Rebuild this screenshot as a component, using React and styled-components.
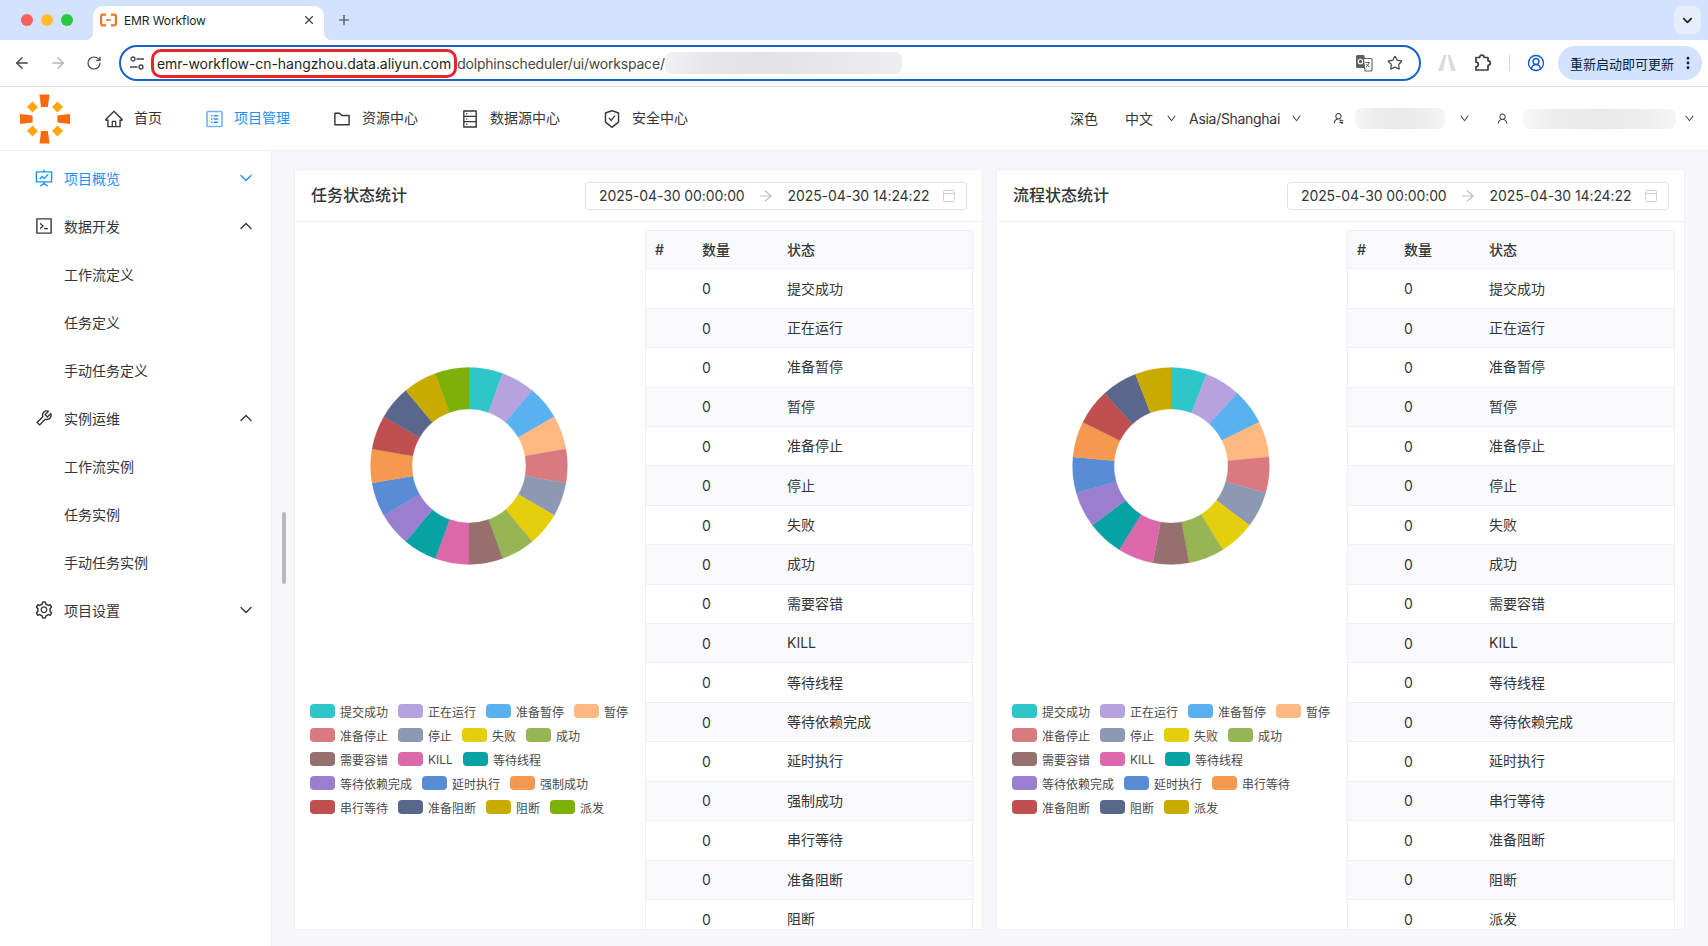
import styled, { createGlobalStyle } from "styled-components";
import { ArrowLeft, ArrowRight, RotateCw, Star, Plus, X, ChevronDown, ChevronUp, CircleUserRound, EllipsisVertical } from "lucide-react";
import {
  AiOutlineHome,
  AiOutlineFolder,
  AiOutlineDatabase,
  AiOutlineSafetyCertificate,
  AiOutlineFundProjectionScreen,
  AiOutlineCode,
  AiOutlineTool,
  AiOutlineSetting,
  AiOutlineDown,
  AiOutlineUser,
  AiOutlineUserSwitch,
  AiOutlineArrowRight,
} from "react-icons/ai";

const Text = "rgb(51, 54, 57)";
const Line = "#efeff5";
const Active = "#1890ff";

const GlobalStyle = createGlobalStyle`
  html, body {
    margin: 0;
    height: 100%;
    overflow: hidden;
    background: #fff;
    font-family: Inter, "Noto Sans CJK SC", sans-serif;
    color: ${Text};
  }
  * { box-sizing: border-box; }
`;

const Page = styled.div`
  width: 1708px;
  height: 946px;
  display: flex;
  flex-direction: column;
  overflow: hidden;
`;

/* browser chrome */
const TabStrip = styled.div`
  height: 40px;
  flex: none;
  background: #d3e3fd;
  display: flex;
  align-items: flex-end;
  padding-left: 21px;
`;

const Lights = styled.div`
  display: flex;
  gap: 8px;
  align-self: center;
  width: 72px;
`;

const Light = styled.span`
  width: 12px;
  height: 12px;
  border-radius: 50%;
  background: ${(p) => p.$color};
`;

const Tab = styled.div`
  position: relative;
  width: 231px;
  height: 34px;
  background: #fff;
  border-radius: 10px 10px 0 0;
  display: flex;
  align-items: center;
  padding: 0 8px 6px 7px;
  font-size: 12px;
  letter-spacing: -0.1px;
  color: #1f1f1f;
  svg { flex: none; }

  &::before, &::after {
    content: "";
    position: absolute;
    bottom: 0;
    width: 8px;
    height: 8px;
  }
  &::before {
    left: -8px;
    background: radial-gradient(circle at 0 0, transparent 8px, #fff 8.5px);
  }
  &::after {
    right: -8px;
    background: radial-gradient(circle at 100% 0, transparent 8px, #fff 8.5px);
  }
`;

const TabTitle = styled.span`
  flex: 1;
  margin-left: 7px;
`;

const NewTab = styled.div`
  width: 40px;
  height: 34px;
  padding-bottom: 6px;
  display: flex;
  align-items: center;
  justify-content: center;
  color: #444746;
`;

const TabMenu = styled.div`
  margin: 0 7px 6px auto;
  width: 27px;
  height: 28px;
  border-radius: 8px;
  background: #e6eefc;
  display: flex;
  align-items: center;
  justify-content: center;
  color: #1f1f1f;
`;

const Toolbar = styled.div`
  height: 47px;
  flex: none;
  background: #fff;
  display: flex;
  align-items: center;
  padding-left: 4px;
  border-bottom: 1px solid #dfdfdf;
  border-radius: 10px 0 0 0;
  position: relative;
`;

const ToolSlot = styled.div`
  width: 36px;
  height: 36px;
  display: flex;
  align-items: center;
  justify-content: center;
  color: ${(p) => p.$color || "#444746"};
  margin-left: ${(p) => p.$ml || 0}px;
`;

const Omnibox = styled.div`
  margin: 0 8px 0 7px;
  width: 1302px;
  height: 36px;
  border: 2px solid #1a62c7;
  border-radius: 18px;
  display: flex;
  align-items: center;
  padding: 0 16px 0 8px;
  font-size: 14px;
  color: #1f1f1f;
`;

const TuneIcon = styled.svg`
  flex: none;
  margin-right: 6px;
`;

const Host = styled.span`
  display: inline-flex;
  align-items: center;
  height: 29px;
  padding: 0 3px;
  border: 3px solid #e8262a;
  border-radius: 10px;
  letter-spacing: -0.05px;
  white-space: nowrap;
`;

const UrlPath = styled.span`
  color: #474747;
  letter-spacing: -0.2px;
  white-space: nowrap;
`;

const Blurred = styled.div`
  width: ${(p) => p.$w}px;
  height: ${(p) => p.$h}px;
  flex: none;
  border-radius: 7px;
  background: linear-gradient(90deg, #f1f1f3 0%, #e7e7ea 18%, #e3e3e6 42%, #e8e8eb 70%, #eeeef1 100%);
`;

const OmniIcons = styled.div`
  margin-left: auto;
  display: flex;
  align-items: center;
  gap: 14px;
  color: #444746;
`;

const ToolDivider = styled.div`
  width: 1px;
  height: 16px;
  margin-left: 8px;
  background: #c9d7ee;
`;

const UpdatePill = styled.div`
  margin-left: 4px;
  width: 144px;
  height: 34px;
  border-radius: 17px;
  background: #d3e3fd;
  display: flex;
  align-items: center;
  padding: 0 6px 0 12px;
  font-size: 13px;
  color: #0a1f44;
  white-space: nowrap;
  svg { margin-left: auto; }
`;

/* app header */
const Header = styled.header`
  height: 64px;
  flex: none;
  display: flex;
  align-items: center;
  padding: 0 13px 0 18px;
  border-bottom: 1px solid ${Line};
  font-size: 14px;
`;

const Nav = styled.nav`
  display: flex;
  align-items: center;
  gap: 42px;
  margin-left: 32px;
`;

const NavItem = styled.div`
  display: flex;
  align-items: center;
  gap: 10px;
  color: ${(p) => (p.$active ? Active : Text)};
  svg { flex: none; }
`;

/* the CJK face sits a little low next to Latin text and icons */
const CjkLabel = styled.span`
  padding-bottom: ${(p) => p.$lift || 2}px;
`;

const HeaderRight = styled.div`
  margin-left: auto;
  display: flex;
  align-items: center;
`;

const HeaderCell = styled.div`
  display: flex;
  align-items: center;
  margin-left: ${(p) => p.$ml || 0}px;
  gap: ${(p) => p.$gap || 0}px;
  white-space: nowrap;
  svg { flex: none; }
`;

const TimeZone = styled.span`
  letter-spacing: -0.3px;
`;

const HeaderBlur = styled(Blurred)`
  background: linear-gradient(90deg, #f7f7f7 0%, #ededed 22%, #e9e9e9 50%, #eeeeee 80%, #f6f6f6 100%);
`;

/* layout below the header */
const Main = styled.div`
  flex: 1;
  min-height: 0;
  display: flex;
  position: relative;
`;

const Sidebar = styled.aside`
  width: 272px;
  flex: none;
  padding-top: 3px;
  background: #fff;
  border-right: 1px solid ${Line};
  font-size: 14px;
`;

const MenuRow = styled.div`
  height: 48px;
  display: flex;
  align-items: center;
  gap: 10px;
  padding: 0 15px 0 ${(p) => (p.$sub ? 64 : 34)}px;
  color: ${(p) => (p.$active ? Active : Text)};
  svg { flex: none; }
  svg:last-child:not(:first-child) { margin-left: auto; }
`;

const ScrollThumb = styled.div`
  position: absolute;
  left: 282px;
  top: 361px;
  width: 4px;
  height: 72px;
  border-radius: 2px;
  background: #b9b9bc;
`;

const Content = styled.main`
  flex: 1;
  min-width: 0;
  min-height: 0;
  background: #f6f6fb;
  display: flex;
  gap: 13px;
  padding: 18px 22px 16px 22px;
`;

const Card = styled.section`
  width: 689px;
  flex: none;
  background: #fff;
  border: 1px solid ${Line};
  border-radius: 3px;
  overflow: hidden;
`;

const CardHeader = styled.div`
  height: 52px;
  display: flex;
  align-items: center;
  justify-content: space-between;
  padding: 0 15px 0 16px;
  border-bottom: 1px solid ${Line};
`;

const CardTitle = styled.h2`
  margin: 0;
  padding-bottom: 4px;
  font-size: 16px;
  font-weight: 500;
`;

const DateRange = styled.div`
  width: 382px;
  height: 28px;
  border: 1px solid #e0e0e6;
  border-radius: 3px;
  display: flex;
  align-items: center;
  padding: 0 10px 0 13px;
  font-size: 14px;
  letter-spacing: -0.1px;
  color: ${Text};
  white-space: nowrap;
`;

const RangeArrow = styled(AiOutlineArrowRight)`
  margin: 0 14px 0 13px;
  color: #c2c2c2;
  flex: none;
`;

const CalendarIcon = styled.svg`
  margin-left: auto;
  flex: none;
`;

const CardBody = styled.div`
  display: flex;
  align-items: flex-start;
`;

const ChartPane = styled.div`
  width: 350px;
  flex: none;
  padding: 8px 5px 0 15px;
`;

const ChartBox = styled.div`
  height: 472px;
  margin-left: -16px;
  margin-right: -4px;
  display: flex;
  align-items: center;
  justify-content: center;
`;

const Legend = styled.div`
  margin-top: 2px;
  display: flex;
  flex-wrap: wrap;
  gap: 10px;
`;

const LegendItem = styled.div`
  display: flex;
  align-items: center;
  gap: 5px;
  height: 14px;
  font-size: 12px;
  color: #4a4a4a;
  white-space: nowrap;
`;

const Swatch = styled.span`
  width: 25px;
  height: 14px;
  border-radius: 4px;
  background: ${(p) => p.$color};
`;

const Table = styled.div`
  width: 328px;
  flex: none;
  margin-top: 8px;
  border: 1px solid ${Line};
  border-bottom: 0;
  border-radius: 3px 3px 0 0;
  font-size: 14px;
`;

const TableRow = styled.div`
  height: ${(p) => (p.$head ? 38.42 : 39.42)}px;
  display: grid;
  grid-template-columns: 56px 85px 1fr;
  align-items: center;
  border-bottom: 1px solid ${Line};
  background: ${(p) => (p.$striped ? "#fafafc" : "#fff")};
  font-weight: ${(p) => (p.$head ? 500 : 400)};
`;

const HashCell = styled.span`
  padding-left: 9px;
`;

const colors = [
  "#2ec7c9", "#b6a2de", "#5ab1ef", "#ffb980", "#d87a80", "#8d98b3",
  "#e5cf0d", "#97b552", "#95706d", "#dc69aa", "#07a2a4", "#9a7fd1",
  "#588dd5", "#f5994e", "#c05050", "#59678c", "#c9ab00", "#7eb00a",
];

const taskStates = [
  "提交成功", "正在运行", "准备暂停", "暂停", "准备停止", "停止", "失败", "成功", "需要容错",
  "KILL", "等待线程", "等待依赖完成", "延时执行", "强制成功", "串行等待", "准备阻断", "阻断", "派发",
];
const flowStates = taskStates.filter((s) => s !== "强制成功");

const VISIBLE_ROWS = 17;

const menu = [
  { label: "项目概览", Icon: AiOutlineFundProjectionScreen, active: true, arrow: "down" },
  { label: "数据开发", Icon: AiOutlineCode, arrow: "up" },
  { label: "工作流定义", sub: true },
  { label: "任务定义", sub: true },
  { label: "手动任务定义", sub: true },
  { label: "实例运维", Icon: AiOutlineTool, arrow: "up" },
  { label: "工作流实例", sub: true },
  { label: "任务实例", sub: true },
  { label: "手动任务实例", sub: true },
  { label: "项目设置", Icon: AiOutlineSetting, arrow: "down" },
];

const point = (r, a) => {
  const rad = (a * Math.PI) / 180;
  return `${110 + r * Math.sin(rad)} ${110 - r * Math.cos(rad)}`;
};

const Donut = ({ count }) => {
  const step = 360 / count;
  return (
    <svg width="220" height="220" viewBox="0 0 220 220">
      {colors.slice(0, count).map((c, i) => {
        const a0 = i * step;
        const a1 = a0 + step;
        const d = `M${point(98.4, a0)}A98.4 98.4 0 0 1 ${point(98.4, a1)}L${point(57, a1)}A57 57 0 0 0 ${point(57, a0)}Z`;
        return <path key={c} d={d} fill={c} stroke={c} strokeWidth="0.3" />;
      })}
    </svg>
  );
};

const Logo = () => (
  <svg width="54" height="54" viewBox="0 0 54 54">
    <g fill="#f9690e">
      <path d="M21.5 2.5h10l-1.6 12.6h-6.8z" />
      <path d="M21.5 51.5h10l-1.6-12.6h-6.8z" />
      <path d="M2 22l12.6 1.6v6.8L2 32z" />
      <path d="M52 22l-12.6 1.6v6.8L52 32z" />
    </g>
    <g fill="#ffa50f">
      <path d="M14.5 9.5l5.5 5.5-5.5 5.5L9 15z" />
      <path d="M39.5 9.5l5.5 5.5-5.5 5.5L34 15z" />
      <path d="M14.5 33.5l5.5 5.5-5.5 5.5L9 39z" />
      <path d="M39.5 33.5l5.5 5.5-5.5 5.5L34 39z" />
    </g>
  </svg>
);

const Favicon = () => (
  <svg width="17" height="14" viewBox="0 0 17 14" fill="none" stroke="#f5761a" strokeWidth="2.2">
    <path d="M6 1.6H2.4a1.3 1.3 0 0 0-1.3 1.3v8.2a1.3 1.3 0 0 0 1.3 1.3H6" />
    <path d="M11 1.6h3.6a1.3 1.3 0 0 1 1.3 1.3v8.2a1.3 1.3 0 0 1-1.3 1.3H11" />
    <path d="M6 7h5" strokeWidth="1.6" />
  </svg>
);

const ProjectIcon = () => (
  <svg width="20" height="20" viewBox="-2 -1.5 20 20" fill="none">
    <rect x="1" y="1" width="15" height="15" rx="1" stroke="#6db3f8" strokeWidth="1.6" />
    <g fill={Active}>
      <rect x="5" y="4.5" width="1.4" height="1.4" />
      <rect x="5" y="7.8" width="1.4" height="1.4" />
      <rect x="5" y="11.1" width="1.4" height="1.4" />
      <rect x="7.6" y="4.5" width="4.6" height="1.4" />
      <rect x="7.6" y="7.8" width="4.6" height="1.4" />
      <rect x="7.6" y="11.1" width="4.6" height="1.4" />
    </g>
  </svg>
);

const Translate = () => (
  <svg width="18" height="18" viewBox="0 0 18 18">
    <path d="M1 2.5A1.5 1.5 0 0 1 2.5 1H9l1 3H9v10H2.5A1.5 1.5 0 0 1 1 12.5z" fill="#5f5f5f" />
    <circle cx="5.5" cy="7.5" r="2.3" fill="none" stroke="#fff" strokeWidth="1.1" />
    <path d="M8.5 4.5H16a1 1 0 0 1 1 1V16a1 1 0 0 1-1 1H10z" fill="#fff" stroke="#5f5f5f" strokeWidth="1.1" />
    <path d="M10.5 8.5h4.5M14 8.5c-.5 2-1.5 3.5-3 4.5M11.5 10c.6 1.3 1.6 2.4 3 3" fill="none" stroke="#5f5f5f" strokeWidth="1" />
  </svg>
);

const GreyPeaks = () => (
  <svg width="18" height="16" viewBox="0 0 18 16" fill="#dcdcdc">
    <path d="M5.5 0h3L5 16H0z" />
    <path d="M9.5 0h3L18 16h-5z" />
  </svg>
);

const ExtensionIcon = () => (
  <svg width="18" height="20" viewBox="0 0 18 20" fill="none" stroke="#3c4043" strokeWidth="1.7" strokeLinejoin="round">
    <path d="M2 4.5h3.5a2.3 2.3 0 0 1 4.6 0H14v3.3a2.3 2.3 0 0 1 0 4.6V17H2v-3.2a2.3 2.3 0 0 0 0-4.6z" />
  </svg>
);

const SideChevron = ({ dir, color }) => {
  const Icon = dir === "up" ? ChevronUp : ChevronDown;
  return <Icon size={20} strokeWidth={1.6} color={color} />;
};

const StatCard = ({ title, start, end, states }) => (
  <Card>
    <CardHeader>
      <CardTitle>{title}</CardTitle>
      <DateRange>
        {start}
        <RangeArrow size={16} />
        {end}
        <CalendarIcon width="14" height="14" viewBox="0 0 14 14" fill="none" stroke="#d0d0d4">
          <rect x="1.5" y="1.5" width="11" height="11" rx="1" />
          <path d="M1.5 4.5h11" />
        </CalendarIcon>
      </DateRange>
    </CardHeader>
    <CardBody>
      <ChartPane>
        <ChartBox>
          <Donut count={states.length} />
        </ChartBox>
        <Legend>
          {states.map((s, i) => (
            <LegendItem key={s}>
              <Swatch $color={colors[i]} />
              {s}
            </LegendItem>
          ))}
        </Legend>
      </ChartPane>
      <Table>
        <TableRow $head $striped>
          <HashCell>#</HashCell>
          <CjkLabel>数量</CjkLabel>
          <CjkLabel>状态</CjkLabel>
        </TableRow>
        {states.slice(0, VISIBLE_ROWS).map((s, i) => (
          <TableRow key={s} $striped={i % 2 === 1}>
            <HashCell />
            <span>0</span>
            <CjkLabel>{s}</CjkLabel>
          </TableRow>
        ))}
      </Table>
    </CardBody>
  </Card>
);

export default function App() {
  return (
    <Page>
      <GlobalStyle />
      <TabStrip>
        <Lights>
          <Light $color="#fe5f57" />
          <Light $color="#febc2e" />
          <Light $color="#28c840" />
        </Lights>
        <Tab>
          <Favicon />
          <TabTitle>EMR Workflow</TabTitle>
          <X size={14} strokeWidth={2} color="#444746" />
        </Tab>
        <NewTab>
          <Plus size={16} strokeWidth={1.8} />
        </NewTab>
        <TabMenu>
          <ChevronDown size={15} strokeWidth={2.6} />
        </TabMenu>
      </TabStrip>
      <Toolbar>
        <ToolSlot><ArrowLeft size={18} strokeWidth={1.8} /></ToolSlot>
        <ToolSlot $color="#b4b5b6"><ArrowRight size={18} strokeWidth={1.8} /></ToolSlot>
        <ToolSlot><RotateCw size={16} strokeWidth={1.8} /></ToolSlot>
        <Omnibox>
          <TuneIcon width="16" height="16" viewBox="0 0 16 16" fill="none" stroke="#444746" strokeWidth="1.3">
            <circle cx="4" cy="4" r="2" />
            <path d="M7.5 4H15M1 12h7.5" />
            <circle cx="12" cy="12" r="2" />
          </TuneIcon>
          <Host>emr-workflow-cn-hangzhou.data.aliyun.com</Host>
          <UrlPath>dolphinscheduler/ui/workspace/</UrlPath>
          <Blurred $w={237} $h={22} />
          <OmniIcons>
            <Translate />
            <Star size={16} strokeWidth={1.8} />
          </OmniIcons>
        </Omnibox>
        <ToolSlot><GreyPeaks /></ToolSlot>
        <ToolSlot><ExtensionIcon /></ToolSlot>
        <ToolDivider />
        <ToolSlot $ml={8} $color="#0b57d0"><CircleUserRound size={18} strokeWidth={1.8} /></ToolSlot>
        <UpdatePill>
          重新启动即可更新
          <EllipsisVertical size={16} strokeWidth={2.4} />
        </UpdatePill>
      </Toolbar>
      <Header>
        <Logo />
        <Nav>
          <NavItem><AiOutlineHome size={20} /><CjkLabel $lift={3}>首页</CjkLabel></NavItem>
          <NavItem $active><ProjectIcon /><CjkLabel $lift={3}>项目管理</CjkLabel></NavItem>
          <NavItem><AiOutlineFolder size={20} /><CjkLabel $lift={3}>资源中心</CjkLabel></NavItem>
          <NavItem><AiOutlineDatabase size={20} /><CjkLabel $lift={3}>数据源中心</CjkLabel></NavItem>
          <NavItem><AiOutlineSafetyCertificate size={20} /><CjkLabel $lift={3}>安全中心</CjkLabel></NavItem>
        </Nav>
        <HeaderRight>
          <HeaderCell><CjkLabel>深色</CjkLabel></HeaderCell>
          <HeaderCell $ml={27} $gap={13}><CjkLabel>中文</CjkLabel><AiOutlineDown size={11} /></HeaderCell>
          <HeaderCell $ml={12} $gap={11}><TimeZone>Asia/Shanghai</TimeZone><AiOutlineDown size={11} /></HeaderCell>
          <HeaderCell $ml={30} $gap={10}>
            <AiOutlineUserSwitch size={13} />
            <HeaderBlur $w={90} $h={21} />
          </HeaderCell>
          <HeaderCell $ml={14}><AiOutlineDown size={11} /></HeaderCell>
          <HeaderCell $ml={26} $gap={14}>
            <AiOutlineUser size={13} />
            <HeaderBlur $w={153} $h={20} />
          </HeaderCell>
          <HeaderCell $ml={8}><AiOutlineDown size={11} /></HeaderCell>
        </HeaderRight>
      </Header>
      <Main>
        <Sidebar>
          {menu.map(({ label, Icon, sub, active, arrow }) => (
            <MenuRow key={label} $sub={sub} $active={active}>
              {Icon && <Icon size={20} />}
              <span>{label}</span>
              {arrow && <SideChevron dir={arrow} />}
            </MenuRow>
          ))}
        </Sidebar>
        <ScrollThumb />
        <Content>
          <StatCard title="任务状态统计" start="2025-04-30 00:00:00" end="2025-04-30 14:24:22" states={taskStates} />
          <StatCard title="流程状态统计" start="2025-04-30 00:00:00" end="2025-04-30 14:24:22" states={flowStates} />
        </Content>
      </Main>
    </Page>
  );
}
